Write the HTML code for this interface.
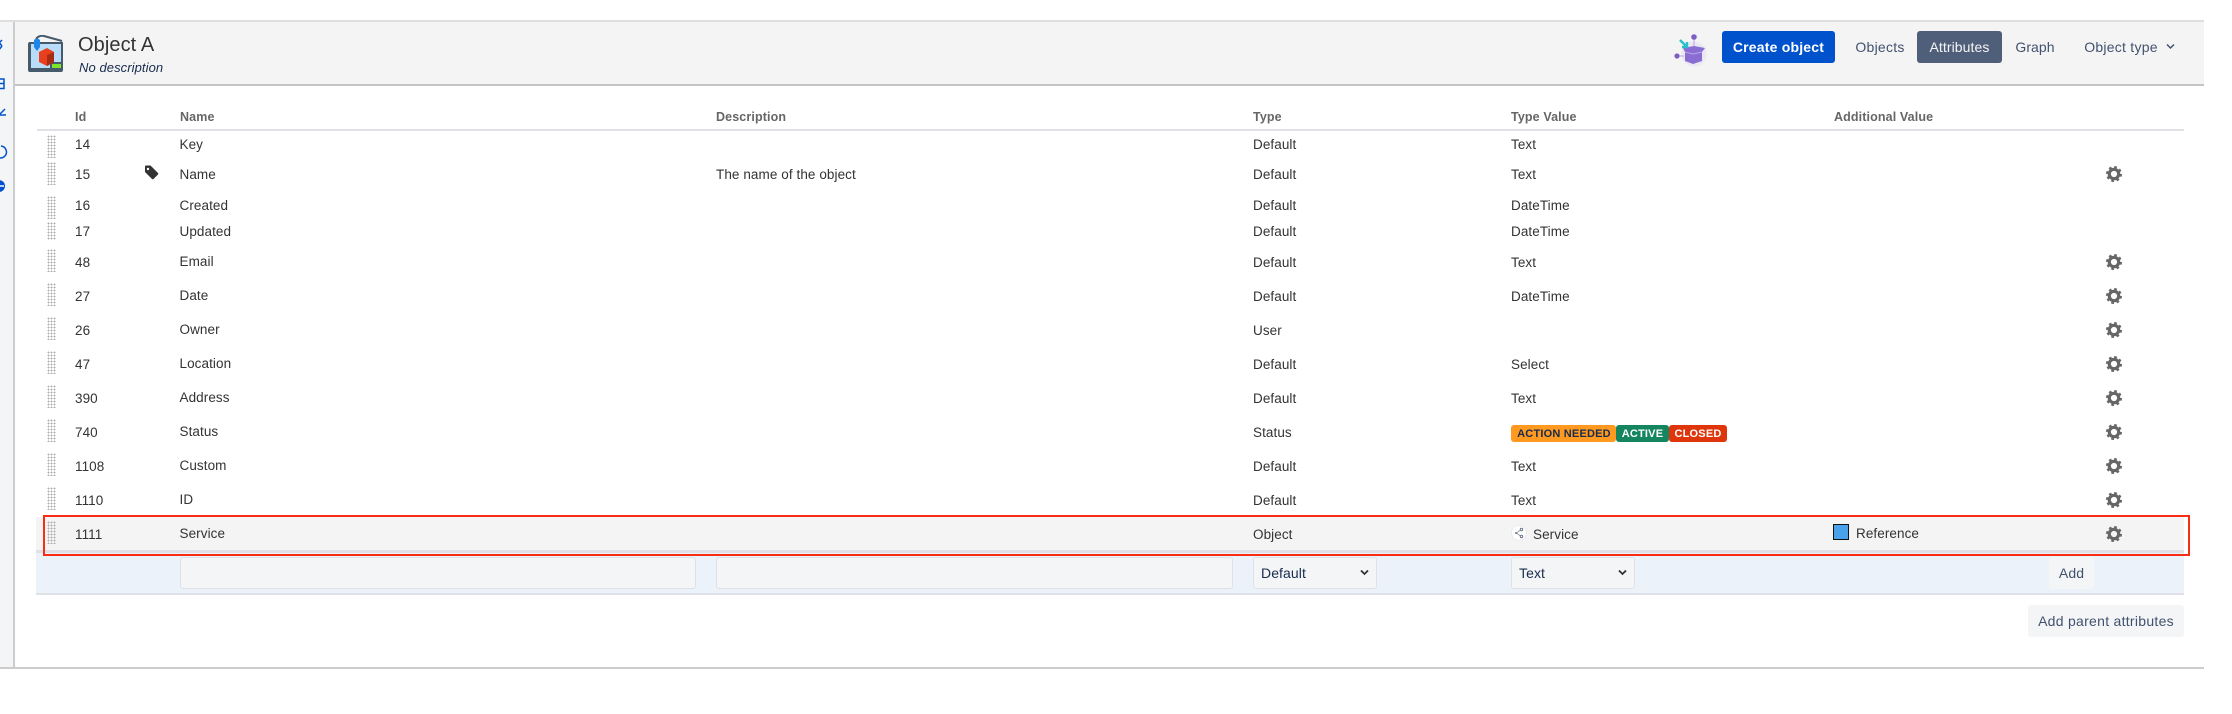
<!DOCTYPE html>
<html><head><meta charset="utf-8"><style>
*{box-sizing:border-box}
html,body{margin:0;padding:0;background:#fff}
body{width:2232px;height:714px;position:relative;overflow:hidden;font-family:"Liberation Sans",sans-serif;font-size:13.5px;letter-spacing:.08px;color:#333}
.a{position:absolute}
.t{position:absolute;line-height:20px;height:20px;white-space:nowrap}
.n{margin-left:-.5px}
.h{position:absolute;line-height:20px;white-space:nowrap;font-weight:700;font-size:12.5px;letter-spacing:.12px;color:#666;top:107px}
.g{position:absolute;left:46.5px;width:9px;height:23px;background-image:radial-gradient(circle,#aaa 0.75px,transparent 1.05px);background-size:3px 3px}
.gear{position:absolute;left:2106px;width:16px;height:16px}
.btn{position:absolute;border-radius:3px;text-align:center;line-height:32px;height:32px}
.inp{position:absolute;top:557px;height:32px;background:#f4f5f7;border:1px solid #dfe1e6;border-radius:3px;color:#172b4d;font-size:14px;line-height:30px;padding-left:7px}
.bd{position:absolute;top:425px;height:17px;border-radius:3px;font-size:11px;font-weight:700;line-height:18px;text-align:center;letter-spacing:.2px}
</style></head><body>
<svg width="0" height="0" style="position:absolute"><defs>
<g id="gr"><circle cx="8" cy="8" r="4.7" fill="none" stroke="#666" stroke-width="3.2"/><circle cx="8" cy="8" r="6.7" fill="none" stroke="#666" stroke-width="2.6" stroke-dasharray="2.6 2.66"/></g>
</defs></svg>

<!-- frame -->
<div class="a" style="left:0;top:20px;width:15px;height:648px;background:#f4f5f7;border-right:2px solid #ccc"></div>
<div class="a" style="left:15px;top:20px;width:2189px;height:66px;background:#f4f4f5;border-top:2px solid #dedede;border-bottom:2px solid #c4c4c4"></div>
<div class="a" style="left:0;top:20px;width:15px;height:2px;background:#dedede"></div>
<div class="a" style="left:0;top:667px;width:2204px;height:2px;background:#ccc"></div>

<!-- sidebar clipped icons -->
<svg class="a" style="left:0;top:30px" width="13" height="180" fill="none" stroke="#0052cc" stroke-width="1.5">
<path d="M-2 11 L2 16 M-2 21 L2 16 M2 10 L-1 13"/>
<path d="M-2 49H4V53.5H-2M-2 53.5H4V58.5H-2"/>
<path d="M-1 85 H6 M0 84 L5 79"/>
<path d="M1 116 A 6 6 0 0 1 0 128"/>
<circle cx="-1" cy="156" r="6" fill="#0052cc" stroke="none"/><path d="M0 156h4" stroke="#fff"/>
</svg>

<!-- logo -->
<svg class="a" style="left:28px;top:35px" width="36" height="38" viewBox="0 0 36 38">
<path d="M2 7 H35 V35 a2 2 0 0 1-2 2 H2 a2 2 0 0 1-2-2 V9 a2 2 0 0 1 2-2z" fill="#455a6b"/>
<path d="M8 4 Q11 0 16 1 L34 6" fill="none" stroke="#455a6b" stroke-width="2"/>
<path d="M3 9 H33 V27 H22 V33 H3z" fill="#b9dcf9"/>
<path d="M24 29H33V33H24z" fill="#7ee52d"/>
<path d="M6 5 Q9 2 12 5 V12 L9 16 L6 12z" fill="#1d86e8"/>
<path d="M11 17 L19 13 L26 17 V27 L19 31 L11 27z" fill="#e83f1f"/>
<path d="M19 20 L26 17 V27 L19 31z" fill="#a82c12"/>
</svg>
<div class="t" style="left:78px;top:35px;font-size:20px;color:#333">Object A</div>
<div class="t" style="left:79px;top:58px;font-size:13px;font-style:italic;color:#172b4d">No description</div>

<!-- header right -->
<svg class="a" style="left:1674px;top:33px" width="34" height="34" viewBox="0 0 34 34">
<circle cx="20" cy="21" r="12.5" fill="#e9e8f3"/>
<path d="M20 4V15M3 23H10" stroke="#b8a6e0" stroke-width="1"/>
<circle cx="20" cy="4" r="2.8" fill="#7c5fc4"/><circle cx="3" cy="23" r="2.6" fill="#7c5fc4"/>
<path d="M9 15 L20 13 L31 15 L28 19 V28 L19 31 L11 28 V19z" fill="#8a6dd3"/>
<path d="M11 19 L19 21 L28 19" fill="none" stroke="#b7a5e8" stroke-width="1"/>
<path d="M6 7 L13 14 M8 14 H13 V9" stroke="#29bfc9" stroke-width="2.4" fill="none"/>
</svg>
<div class="btn" style="left:1722px;top:31px;width:113px;background:#0052cc;color:#fff;font-weight:700;font-size:14px;letter-spacing:.2px">Create object</div>
<div class="t" style="left:1855px;top:37px;font-size:14px;letter-spacing:.25px;color:#42526e;width:50px;text-align:center">Objects</div>
<div class="btn" style="left:1917px;top:31px;width:85px;background:#505f79;color:#f4f5f7;font-size:14px">Attributes</div>
<div class="t" style="left:2015px;top:37px;font-size:14px;color:#42526e;width:40px;text-align:center">Graph</div>
<div class="t" style="left:2081px;top:37px;font-size:14px;letter-spacing:.25px;color:#42526e;width:80px;text-align:center">Object type</div>
<svg class="a" style="left:2166px;top:43px" width="9" height="7" fill="none" stroke="#42526e" stroke-width="1.5"><path d="M1 1.5L4.5 5L8 1.5"/></svg>

<!-- table head -->
<div class="h" style="left:75px">Id</div>
<div class="h" style="left:180px">Name</div>
<div class="h" style="left:716px">Description</div>
<div class="h" style="left:1253px">Type</div>
<div class="h" style="left:1511px">Type Value</div>
<div class="h" style="left:1834px">Additional Value</div>
<div class="a" style="left:37px;top:129px;width:2147px;height:2px;background:#dfe1e6"></div>

<!-- selected row bg -->
<div class="a" style="left:36px;top:517px;width:2148px;height:36px;background:#f4f4f4;border-bottom:3px solid #dfe1e6"></div>
<!-- form row bg -->
<div class="a" style="left:36px;top:553px;width:2148px;height:42px;background:#ebf2f9;border-bottom:2px solid #dfe1e6"></div>

<!-- grips -->
<div class="g" style="top:135px"></div>
<div class="g" style="top:162px"></div>
<div class="g" style="top:196px"></div>
<div class="g" style="top:222px;height:18px"></div>
<div class="g" style="top:249px"></div>
<div class="g" style="top:283px"></div>
<div class="g" style="top:317px"></div>
<div class="g" style="top:351px"></div>
<div class="g" style="top:385px"></div>
<div class="g" style="top:419px"></div>
<div class="g" style="top:453px"></div>
<div class="g" style="top:487px"></div>
<div class="g" style="top:521px"></div>

<!-- rows -->
<div class="a" style="left:0;top:1px;width:2232px;height:0">
<div class="t" style="left:75px;top:134px">14</div><div class="t n" style="left:180px;top:134px">Key</div><div class="t" style="left:1253px;top:134px">Default</div><div class="t" style="left:1511px;top:134px">Text</div>

<div class="t" style="left:75px;top:164px">15</div><div class="t n" style="left:180px;top:164px">Name</div><div class="t" style="left:716px;top:164px">The name of the object</div><div class="t" style="left:1253px;top:164px">Default</div><div class="t" style="left:1511px;top:164px">Text</div>

<div class="t" style="left:75px;top:195px">16</div><div class="t n" style="left:180px;top:195px">Created</div><div class="t" style="left:1253px;top:195px">Default</div><div class="t" style="left:1511px;top:195px">DateTime</div>

<div class="t" style="left:75px;top:221px">17</div><div class="t n" style="left:180px;top:221px">Updated</div><div class="t" style="left:1253px;top:221px">Default</div><div class="t" style="left:1511px;top:221px">DateTime</div>

<div class="t" style="left:75px;top:252px">48</div><div class="t n" style="left:180px;top:251px">Email</div><div class="t" style="left:1253px;top:252px">Default</div><div class="t" style="left:1511px;top:252px">Text</div>

<div class="t" style="left:75px;top:286px">27</div><div class="t n" style="left:180px;top:285px">Date</div><div class="t" style="left:1253px;top:286px">Default</div><div class="t" style="left:1511px;top:286px">DateTime</div>

<div class="t" style="left:75px;top:320px">26</div><div class="t n" style="left:180px;top:319px">Owner</div><div class="t" style="left:1253px;top:320px">User</div>

<div class="t" style="left:75px;top:354px">47</div><div class="t n" style="left:180px;top:353px">Location</div><div class="t" style="left:1253px;top:354px">Default</div><div class="t" style="left:1511px;top:354px">Select</div>

<div class="t" style="left:75px;top:388px">390</div><div class="t n" style="left:180px;top:387px">Address</div><div class="t" style="left:1253px;top:388px">Default</div><div class="t" style="left:1511px;top:388px">Text</div>

<div class="t" style="left:75px;top:422px">740</div><div class="t n" style="left:180px;top:421px">Status</div><div class="t" style="left:1253px;top:422px">Status</div>

<div class="t" style="left:75px;top:456px">1108</div><div class="t n" style="left:180px;top:455px">Custom</div><div class="t" style="left:1253px;top:456px">Default</div><div class="t" style="left:1511px;top:456px">Text</div>

<div class="t" style="left:75px;top:490px">1110</div><div class="t n" style="left:180px;top:489px">ID</div><div class="t" style="left:1253px;top:490px">Default</div><div class="t" style="left:1511px;top:490px">Text</div>

<div class="t" style="left:75px;top:524px">1111</div><div class="t n" style="left:180px;top:523px">Service</div><div class="t" style="left:1253px;top:524px">Object</div><div class="t" style="left:1533px;top:524px">Service</div><div class="t" style="left:1856px;top:523px">Reference</div>
</div>

<!-- tag -->
<svg class="a" style="left:144px;top:165px" width="15" height="15" viewBox="0 0 15 15"><path d="M1 1.5 Q1 .5 2 .5 H6.5 L14 8 Q14.6 8.8 14 9.5 L9.5 14 Q8.8 14.6 8 14 L1 7z" fill="#333"/><circle cx="4" cy="4" r="1.2" fill="#fff"/></svg>

<!-- gears -->
<svg class="gear" style="top:166px"><use href="#gr"/></svg>
<svg class="gear" style="top:254px"><use href="#gr"/></svg>
<svg class="gear" style="top:288px"><use href="#gr"/></svg>
<svg class="gear" style="top:322px"><use href="#gr"/></svg>
<svg class="gear" style="top:356px"><use href="#gr"/></svg>
<svg class="gear" style="top:390px"><use href="#gr"/></svg>
<svg class="gear" style="top:424px"><use href="#gr"/></svg>
<svg class="gear" style="top:458px"><use href="#gr"/></svg>
<svg class="gear" style="top:492px"><use href="#gr"/></svg>
<svg class="gear" style="top:526px"><use href="#gr"/></svg>

<!-- badges -->
<div class="bd" style="left:1511px;width:105px;background:#ff991f;color:#172b4d;padding-left:1px">ACTION NEEDED</div>
<div class="bd" style="left:1616px;width:53px;background:#14855f;color:#fff">ACTIVE</div>
<div class="bd" style="left:1669px;width:58px;background:#de350b;color:#fff">CLOSED</div>

<!-- service icon -->
<svg class="a" style="left:1511px;top:525px" width="16" height="16" viewBox="0 0 16 16"><circle cx="8" cy="8" r="7.5" fill="#fff" stroke="#ebecf0"/><path d="M10 4.5L5.5 8L10 11.5" fill="none" stroke="#8b93a7" stroke-width=".8"/><circle cx="10.5" cy="4.5" r="1.2" fill="#fff" stroke="#6b778c"/><circle cx="5" cy="8" r="1" fill="#6b778c"/><circle cx="10.5" cy="11.5" r="1.2" fill="#fff" stroke="#6b778c"/></svg>
<div class="a" style="left:1833px;top:524px;width:16px;height:16px;background:#4aa3ea;border:1px solid #111"></div>

<!-- form -->
<div class="inp" style="left:180px;width:516px"></div>
<div class="inp" style="left:716px;width:517px"></div>
<div class="inp" style="left:1253px;width:124px">Default</div>
<div class="inp" style="left:1511px;width:124px">Text</div>
<svg class="a" style="left:1360px;top:569px" width="9" height="7" fill="none" stroke="#333" stroke-width="1.8"><path d="M1 1.5L4.5 5L8 1.5"/></svg>
<svg class="a" style="left:1618px;top:569px" width="9" height="7" fill="none" stroke="#333" stroke-width="1.8"><path d="M1 1.5L4.5 5L8 1.5"/></svg>
<div class="btn" style="left:2049px;top:557px;width:45px;background:#f4f5f7;color:#42526e;font-size:14px">Add</div>
<div class="btn" style="left:2028px;top:605px;width:156px;background:#f4f5f7;color:#42526e;font-size:14px;letter-spacing:.28px">Add parent attributes</div>

<!-- red box -->
<div class="a" style="left:43px;top:515px;width:2147px;height:41px;border:2px solid #f92c14"></div>
</body></html>
